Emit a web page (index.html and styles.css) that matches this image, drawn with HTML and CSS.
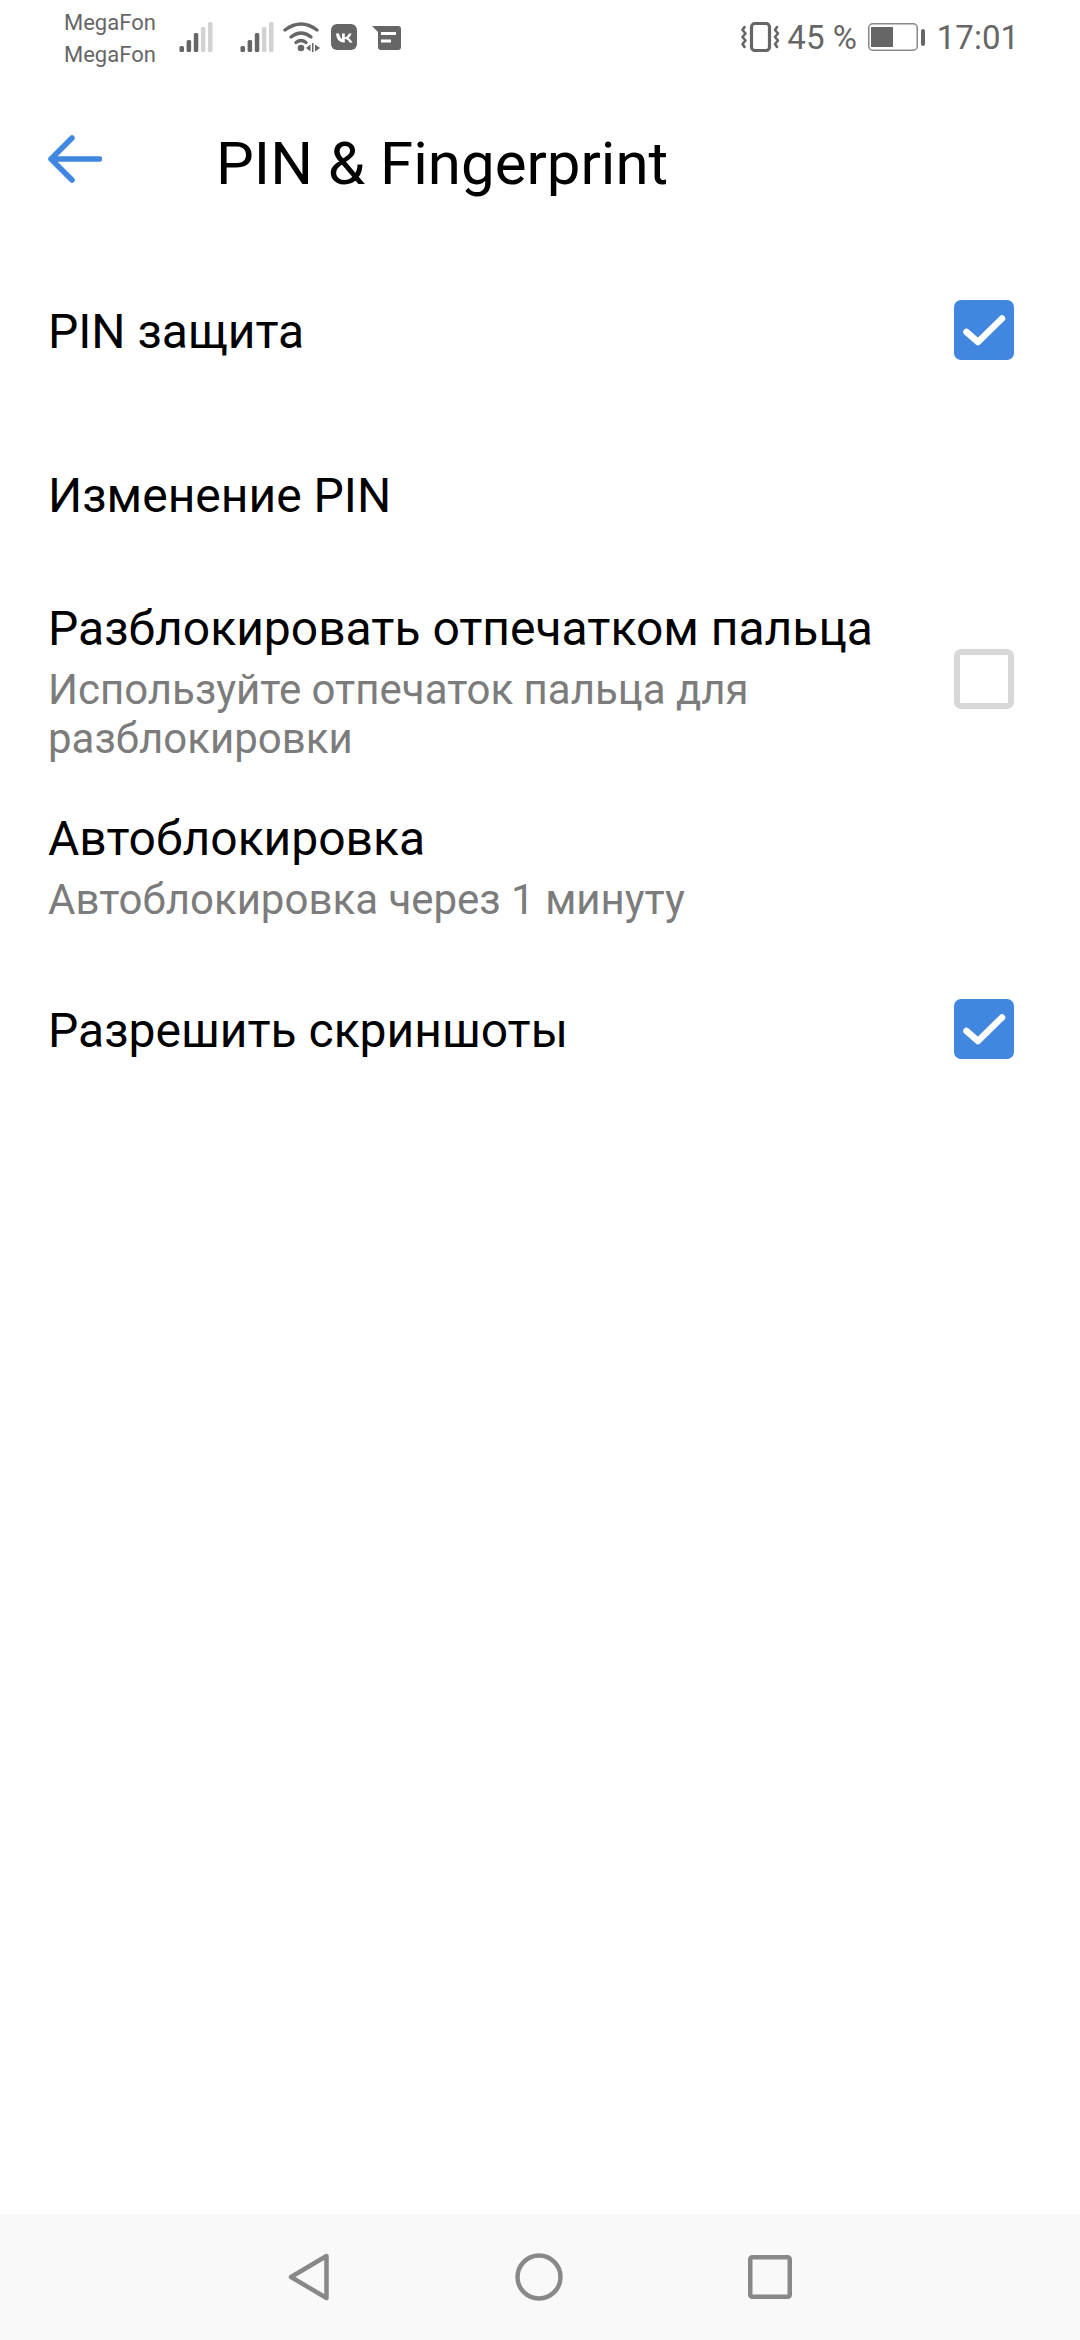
FILE: index.html
```html
<!DOCTYPE html>
<html lang="ru">
<head>
    <meta charset="UTF-8">
    <meta name="viewport" content="width=device-width, initial-scale=1.0">
    <title>PIN &amp; Fingerprint</title>
    <link rel="stylesheet" href="styles.css">
</head>
<body>
    <div class="screen">
        <div class="status-bar">
            <div class="status-left">
                <div class="carriers">
                    <span>MegaFon</span>
                    <span>MegaFon</span>
                </div>
                <svg class="signal signal-first" width="34" height="30" viewBox="0 0 34 30">
                    <rect x="0.500" y="24" width="4.500" height="6" rx="1.500" fill="#666"/>
                    <rect x="7.600" y="18" width="4.500" height="12" rx="1.500" fill="#666"/>
                    <rect x="14.800" y="11" width="4.500" height="19" rx="1.500" fill="#666"/>
                    <rect x="21.900" y="5" width="4.500" height="25" rx="1.500" fill="#d2d2d2"/>
                    <rect x="29" y="0" width="4.500" height="30" rx="1.500" fill="#d2d2d2"/>
                </svg>
                <svg class="signal signal-second" width="34" height="30" viewBox="0 0 34 30">
                    <rect x="0.500" y="24" width="4.500" height="6" rx="1.500" fill="#666"/>
                    <rect x="7.600" y="18" width="4.500" height="12" rx="1.500" fill="#666"/>
                    <rect x="14.800" y="11" width="4.500" height="19" rx="1.500" fill="#666"/>
                    <rect x="21.900" y="5" width="4.500" height="25" rx="1.500" fill="#d2d2d2"/>
                    <rect x="29" y="0" width="4.500" height="30" rx="1.500" fill="#d2d2d2"/>
                </svg>
                <svg class="wifi" width="37" height="30" viewBox="0 0 37 30">
                    <path d="M2 8 Q18 -4 34 8" fill="none" stroke="#666" stroke-width="3.400" stroke-linecap="round"/>
                    <path d="M8 15 Q18 7 28 15" fill="none" stroke="#666" stroke-width="3.400" stroke-linecap="round"/>
                    <path d="M13 20.500 Q18 16.500 23 20.500" fill="none" stroke="#666" stroke-width="3.400" stroke-linecap="round"/>
                    <circle cx="18" cy="26" r="3.300" fill="#666"/>
                    <path d="M23 26 L27.500 22.500 V29.500 Z M32 22.500 L37 26 L32 29.500 Z" fill="#666"/>
                    <rect x="29" y="21" width="1.500" height="9" fill="#666"/>
                </svg>
                <svg class="vk" width="26" height="26" viewBox="0 0 26 26">
                    <rect width="26" height="26" rx="6" fill="#666"/>
                    <path d="M5 9.500 H8 C8.500 12 9.500 14 11 15 V9.500 H13.800 V13.500 C15.500 13 17 11.500 17.800 9.500 H20.500 C20 11.500 18.500 13 17.500 14 C19 15 20.500 16.500 21.500 18.500 H18.500 C17.500 16.500 15.800 15 13.800 14.800 V18.500 H12.500 C8 18.500 5.500 15 5 9.500 Z" fill="#fff"/>
                </svg>
                <svg class="msg" width="29" height="24" viewBox="0 0 29 24">
                    <path d="M0 0 H26 a3 3 0 0 1 3 3 V21 a3 3 0 0 1 -3 3 H9 a3 3 0 0 1 -3 -3 V6 Z" fill="#666"/>
                    <rect x="9" y="6" width="15" height="3" fill="#fff"/>
                    <rect x="9" y="13.500" width="10" height="3" fill="#fff"/>
                </svg>
            </div>
            <div class="status-right">
                <svg class="vibrate" width="40" height="30" viewBox="0 0 40 30">
                    <rect x="10.500" y="1.500" width="18" height="27" rx="3.500" fill="none" stroke="#666" stroke-width="3.200"/>
                    <path d="M3.500 5 L1.500 8 L4.500 11.500 L1.500 15 L4.500 18.500 L1.500 22 L3.500 25" fill="none" stroke="#666" stroke-width="2.600" stroke-linecap="round" stroke-linejoin="round"/>
                    <path d="M36 5 L34 8 L37 11.500 L34 15 L37 18.500 L34 22 L36 25" fill="none" stroke="#666" stroke-width="2.600" stroke-linecap="round" stroke-linejoin="round"/>
                </svg>
                <span class="battery-text">45 %</span>
                <svg class="battery" width="57" height="28" viewBox="0 0 57 28">
                    <rect x="0.750" y="0.750" width="48.500" height="26.500" rx="4" fill="none" stroke="#888" stroke-width="1.500"/>
                    <rect x="3" y="4" width="22" height="20" fill="#666"/>
                    <rect x="53" y="6" width="4" height="17" rx="2" fill="#666"/>
                </svg>
                <span class="clock">17:01</span>
            </div>
        </div>

        <header class="toolbar">
            <svg class="back" width="54" height="48" viewBox="0 0 54 48">
                <path d="M51.500 24 H3 M24 3 L3 24 L24 45" fill="none" stroke="#4287df" stroke-width="5.500" stroke-linecap="round" stroke-linejoin="round"/>
            </svg>
            <h1>PIN &amp; Fingerprint</h1>
        </header>

        <main class="list">
            <div class="row">
                <div class="row-text"><div class="row-title">PIN защита</div></div>
                <div class="check check-on">
                    <svg width="60" height="60" viewBox="0 0 60 60"><path d="M12.500 32 L24 42 L48 18.500" fill="none" stroke="#fff" stroke-width="6.500" stroke-linecap="round" stroke-linejoin="round"/></svg>
                </div>
            </div>
            <div class="row">
                <div class="row-text"><div class="row-title">Изменение PIN</div></div>
            </div>
            <div class="row row-tall">
                <div class="row-text">
                    <div class="row-title">Разблокировать отпечатком пальца</div>
                    <div class="row-sub">Используйте отпечаток пальца для разблокировки</div>
                </div>
                <div class="check"></div>
            </div>
            <div class="row row-lock">
                <div class="row-text">
                    <div class="row-title">Автоблокировка</div>
                    <div class="row-sub">Автоблокировка через 1 минуту</div>
                </div>
            </div>
            <div class="row">
                <div class="row-text"><div class="row-title">Разрешить скриншоты</div></div>
                <div class="check check-on">
                    <svg width="60" height="60" viewBox="0 0 60 60"><path d="M12.500 32 L24 42 L48 18.500" fill="none" stroke="#fff" stroke-width="6.500" stroke-linecap="round" stroke-linejoin="round"/></svg>
                </div>
            </div>
        </main>

        <nav class="nav-bar">
            <svg width="42" height="48" viewBox="0 0 42 48"><path d="M38.500 3 L3 24 L38.500 45 Z" fill="none" stroke="#888" stroke-width="4.500" stroke-linejoin="round"/></svg>
            <svg width="48" height="48" viewBox="0 0 48 48"><circle cx="24" cy="24" r="21.500" fill="none" stroke="#888" stroke-width="4.500"/></svg>
            <svg width="44" height="44" viewBox="0 0 44 44"><rect x="2.250" y="2.250" width="39.500" height="39.500" rx="2" fill="none" stroke="#888" stroke-width="4.500"/></svg>
        </nav>
    </div>
</body>
</html>
```

FILE: styles.css
```css
body {
    margin: 0;
    font-family: Roboto, "Noto Sans", sans-serif;
    background-color: #fff;
}

.screen {
    width: 1080px;
    height: 2340px;
    display: flex;
    flex-direction: column;
    overflow: hidden;
}

.status-bar {
    height: 74px;
    padding: 0 61px 0 64px;
    display: flex;
    justify-content: space-between;
    align-items: center;
    color: #666;
}

.status-left, .status-right {
    display: flex;
    align-items: center;
}

.carriers {
    display: flex;
    flex-direction: column;
    margin-top: 4px;
    font-size: 22px;
    line-height: 32px;
}

.signal-first { margin-left: 23px; }
.signal-second { margin-left: 27px; }
.wifi { margin-left: 9px; }
.vk { margin-left: 11px; }
.msg { margin-left: 15px; margin-top: 2px; }

.battery-text {
    font-size: 33px;
    margin-left: 6px;
}

.battery { margin-left: 11px; }

.clock {
    font-size: 33px;
    margin-left: 12px;
}

.toolbar {
    height: 174px;
    padding-left: 48px;
    display: flex;
    align-items: center;
}

.back { margin-bottom: 4px; }

.toolbar h1 {
    margin: 4px 0 0 114px;
    font-size: 60px;
    font-weight: 400;
    color: #000;
}

.list {
    flex: 1;
    padding: 0 66px 0 48px;
}

.row {
    min-height: 164px;
    display: flex;
    align-items: center;
    justify-content: space-between;
}

.row-tall { min-height: 206px; }
.row-lock { min-height: 165px; }

.row-text {
    width: 840px;
    padding-top: 4px;
}

.row-title {
    font-size: 48px;
    line-height: 60px;
    color: #000;
}

.row-sub {
    margin-top: 6px;
    font-size: 42px;
    line-height: 49px;
    color: #7c7c7c;
}

.check {
    width: 60px;
    height: 60px;
    box-sizing: border-box;
    border: 6px solid #d8d8d8;
    border-radius: 7px;
}

.check-on {
    border: none;
    background-color: #4287df;
}

.check svg { display: block; }

.nav-bar {
    height: 126px;
    background-color: #f9f9f9;
    display: flex;
    align-items: center;
    justify-content: center;
    gap: 185px;
}
```
